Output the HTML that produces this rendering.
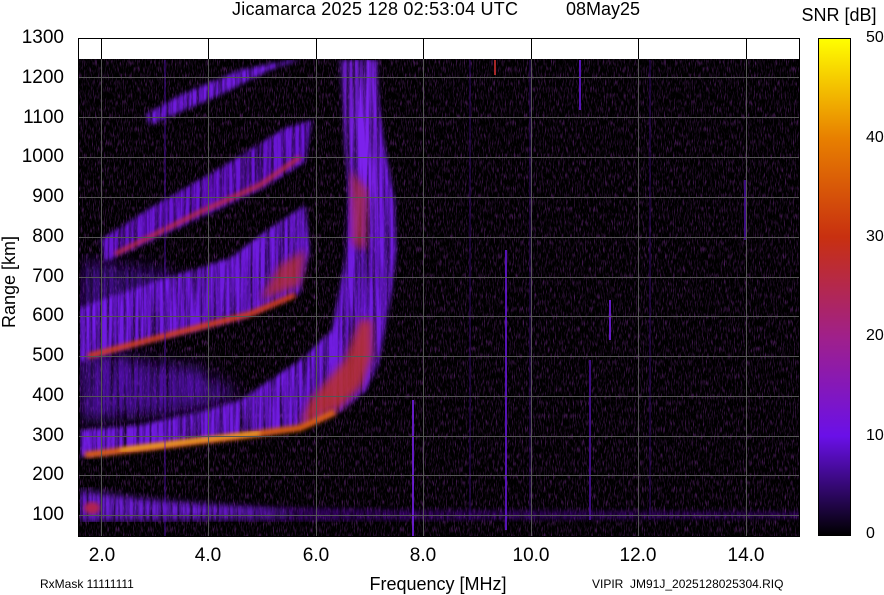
<!DOCTYPE html>
<html><head><style>
html,body{margin:0;padding:0;background:#fff;}
body{width:884px;height:595px;overflow:hidden;position:relative;font-family:"Liberation Sans",sans-serif;}
svg{position:absolute;left:0;top:0;}
</style></head><body>
<svg width="884" height="595" viewBox="0 0 884 595" xmlns="http://www.w3.org/2000/svg" font-family="Liberation Sans, sans-serif">
<defs>
<linearGradient id="cb" x1="0" y1="1" x2="0" y2="0">
<stop offset="0" stop-color="#000"/>
<stop offset="0.2" stop-color="#6a10e8"/>
<stop offset="0.4" stop-color="#a0208a"/>
<stop offset="0.6" stop-color="#c83010"/>
<stop offset="0.8" stop-color="#e88000"/>
<stop offset="1" stop-color="#ffff00"/>
</linearGradient>
<filter id="b2"><feGaussianBlur stdDeviation="2"/></filter>
<filter id="b4"><feGaussianBlur stdDeviation="4"/></filter>
<filter id="b8"><feGaussianBlur stdDeviation="8"/></filter>
<filter id="noise" x="0" y="0" width="100%" height="100%">
<feTurbulence type="fractalNoise" baseFrequency="0.9 0.15" numOctaves="2" seed="3"/>
<feColorMatrix values="0 0 0 0 0.3  0 0 0 0 0.04  0 0 0 0 0.45  0 0 0 1.5 -0.75"/>
</filter>
<filter id="streak" x="0" y="0" width="100%" height="100%">
<feTurbulence type="fractalNoise" baseFrequency="0.3 0.01" numOctaves="2" seed="7" result="t"/>
<feColorMatrix in="t" values="0 0 0 0 0  0 0 0 0 0  0 0 0 0 0  0 0 0 -1.6 1.6" result="m"/>
<feComposite in="SourceGraphic" in2="m" operator="in"/>
</filter>
<clipPath id="cp"><rect x="79" y="59" width="720" height="477"/></clipPath>
</defs>
<text x="232" y="15" font-size="18" textLength="286" lengthAdjust="spacing">Jicamarca 2025 128 02:53:04 UTC</text>
<text x="566" y="15" font-size="18">08May25</text>
<text x="839" y="21" font-size="18" text-anchor="middle">SNR [dB]</text>
<rect x="78.5" y="38.5" width="721" height="498" fill="#fff" stroke="#000"/>
<g clip-path="url(#cp)">
<rect x="79" y="59" width="720" height="477" fill="#000"/>
<rect x="79" y="59" width="720" height="477" filter="url(#noise)"/>
<g filter="url(#streak)">
<path d="M80,495 L200,505 L400,510 L800,512 L800,518 L80,522 Z" fill="#5a10b0" opacity="0.5" filter="url(#b2)"/>
<path d="M80,490 L150,500 L250,508 L300,515 L80,520 Z" fill="#7a20f0" opacity="0.8" filter="url(#b4)"/>
<path d="M80,350 L200,370 L240,395 L200,410 L80,420 Z" fill="#6a18e0" opacity="0.7" filter="url(#b8)"/>
<path d="M80,260 L160,270 L200,290 L100,320 L80,330 Z" fill="#6018d0" opacity="0.6" filter="url(#b8)"/>
<path d="M80,457 L160,447 L260,434 L300,427 L340,412 L365,392 L378,366 L385,330 L392,290 L396,250 L395,200 L385,150 L372,60 L355,60 L350,150 L345,260 L332,330 L300,360 L270,380 L240,400 L200,412 L140,425 L80,430 Z" fill="#7a1af5" opacity="0.9" filter="url(#b2)"/>
<path d="M340,60 L378,60 L380,200 L372,250 L355,240 L345,150 Z" fill="#8020f0" opacity="0.8" filter="url(#b2)"/>
<path d="M80,362 L150,342 L240,320 L300,293 L310,250 L305,205 L270,228 L230,258 L160,280 L100,300 L80,308 Z" fill="#7a1af5" opacity="0.9" filter="url(#b2)"/>
<path d="M105,262 L200,218 L260,190 L305,162 L312,120 L285,128 L220,168 L150,208 L100,240 Z" fill="#7418ea" opacity="0.9" filter="url(#b2)"/>
<path d="M150,125 L220,95 L270,70 L300,60 L290,60 L240,70 L180,95 L145,115 Z" fill="#7a1af5" opacity="0.9" filter="url(#b2)"/>
</g>
<ellipse cx="92" cy="508" rx="8" ry="6" fill="#b02050" filter="url(#b2)"/>
<path d="M300,425 L340,408 L362,385 L372,355 L372,320 L360,320 L345,360 L310,400 Z" fill="#c03020" opacity="0.8" filter="url(#b4)"/>
<path d="M85,455 L160,446 L240,436 L300,428 L335,412" fill="none" stroke="#e06010" stroke-width="6" filter="url(#b2)"/>
<path d="M120,450 L200,440 L260,433" fill="none" stroke="#ffcc30" stroke-width="2.5" filter="url(#b2)"/>
<path d="M350,170 L368,190 L366,250 L352,245 Z" fill="#c03020" opacity="0.6" filter="url(#b4)"/>
<path d="M88,356 L180,332 L250,314 L295,295" fill="none" stroke="#d84010" stroke-width="5" filter="url(#b2)"/>
<path d="M260,300 L300,285 L305,250 L280,265 Z" fill="#c03020" opacity="0.7" filter="url(#b4)"/>
<path d="M115,254 L200,212 L260,185 L300,157" fill="none" stroke="#c02a40" stroke-width="4" filter="url(#b2)"/>
<g stroke-width="2" opacity="0.8">
<line x1="165" y1="60" x2="165" y2="536" stroke="#5a10c0" opacity="0.5"/>
<line x1="413" y1="400" x2="413" y2="536" stroke="#7a20f0"/>
<line x1="506" y1="250" x2="506" y2="530" stroke="#6a18e0"/>
<line x1="580" y1="60" x2="580" y2="110" stroke="#6a18e0"/>
<line x1="610" y1="300" x2="610" y2="340" stroke="#7a20f0"/>
<line x1="590" y1="360" x2="590" y2="520" stroke="#4a10a0"/>
<line x1="495" y1="60" x2="495" y2="75" stroke="#d03030"/>
<line x1="745" y1="180" x2="745" y2="240" stroke="#4a10a0"/>
<line x1="470" y1="60" x2="470" y2="520" stroke="#3a0880" opacity="0.5"/>
<line x1="530" y1="60" x2="530" y2="520" stroke="#3a0880" opacity="0.5"/>
<line x1="650" y1="60" x2="650" y2="520" stroke="#3a0880" opacity="0.5"/>
</g>
</g>
<g stroke="#555" stroke-width="1">
<line x1="101.5" y1="38" x2="101.5" y2="536"/><line x1="208.5" y1="38" x2="208.5" y2="536"/>
<line x1="316.5" y1="38" x2="316.5" y2="536"/><line x1="423.5" y1="38" x2="423.5" y2="536"/>
<line x1="531.5" y1="38" x2="531.5" y2="536"/><line x1="638.5" y1="38" x2="638.5" y2="536"/>
<line x1="746.5" y1="38" x2="746.5" y2="536"/>
<line x1="79" y1="77.5" x2="799" y2="77.5"/><line x1="79" y1="117.5" x2="799" y2="117.5"/>
<line x1="79" y1="157.5" x2="799" y2="157.5"/><line x1="79" y1="197.5" x2="799" y2="197.5"/>
<line x1="79" y1="237.5" x2="799" y2="237.5"/><line x1="79" y1="277.5" x2="799" y2="277.5"/>
<line x1="79" y1="316.5" x2="799" y2="316.5"/><line x1="79" y1="356.5" x2="799" y2="356.5"/>
<line x1="79" y1="396.5" x2="799" y2="396.5"/><line x1="79" y1="436.5" x2="799" y2="436.5"/>
<line x1="79" y1="475.5" x2="799" y2="475.5"/><line x1="79" y1="515.5" x2="799" y2="515.5"/>
</g>
<g stroke="#000"><line x1="101.5" y1="38" x2="101.5" y2="59"/><line x1="208.5" y1="38" x2="208.5" y2="59"/><line x1="316.5" y1="38" x2="316.5" y2="59"/><line x1="423.5" y1="38" x2="423.5" y2="59"/><line x1="531.5" y1="38" x2="531.5" y2="59"/><line x1="638.5" y1="38" x2="638.5" y2="59"/><line x1="746.5" y1="38" x2="746.5" y2="59"/></g>
<rect x="78.5" y="38.5" width="721" height="498" fill="none" stroke="#000"/>
<g font-size="19" text-anchor="end">
<text x="64" y="43">1300</text><text x="64" y="83">1200</text><text x="64" y="123">1100</text>
<text x="64" y="162">1000</text><text x="64" y="202">900</text><text x="64" y="242">800</text>
<text x="64" y="282">700</text><text x="64" y="321">600</text><text x="64" y="361">500</text>
<text x="64" y="401">400</text><text x="64" y="441">300</text><text x="64" y="480">200</text>
<text x="64" y="520">100</text>
</g>
<text transform="translate(15,282) rotate(-90)" font-size="18" text-anchor="middle">Range [km]</text>
<g font-size="19" text-anchor="middle">
<text x="102" y="561">2.0</text><text x="208" y="561">4.0</text><text x="316" y="561">6.0</text>
<text x="423" y="561">8.0</text><text x="531" y="561">10.0</text><text x="638" y="561">12.0</text>
<text x="746" y="561">14.0</text>
</g>
<text x="438" y="590" font-size="18" text-anchor="middle">Frequency [MHz]</text>
<text x="40" y="588" font-size="12">RxMask 11111111</text>
<text x="592" y="588" font-size="12" xml:space="preserve">VIPIR  JM91J_2025128025304.RIQ</text>
<rect x="818.5" y="38.5" width="32" height="497" fill="url(#cb)" stroke="#000"/>
<g font-size="16">
<text x="866" y="42">50</text><text x="866" y="142">40</text><text x="866" y="241">30</text>
<text x="866" y="340">20</text><text x="866" y="440">10</text><text x="866" y="538">0</text>
</g>
</svg>
</body></html>
